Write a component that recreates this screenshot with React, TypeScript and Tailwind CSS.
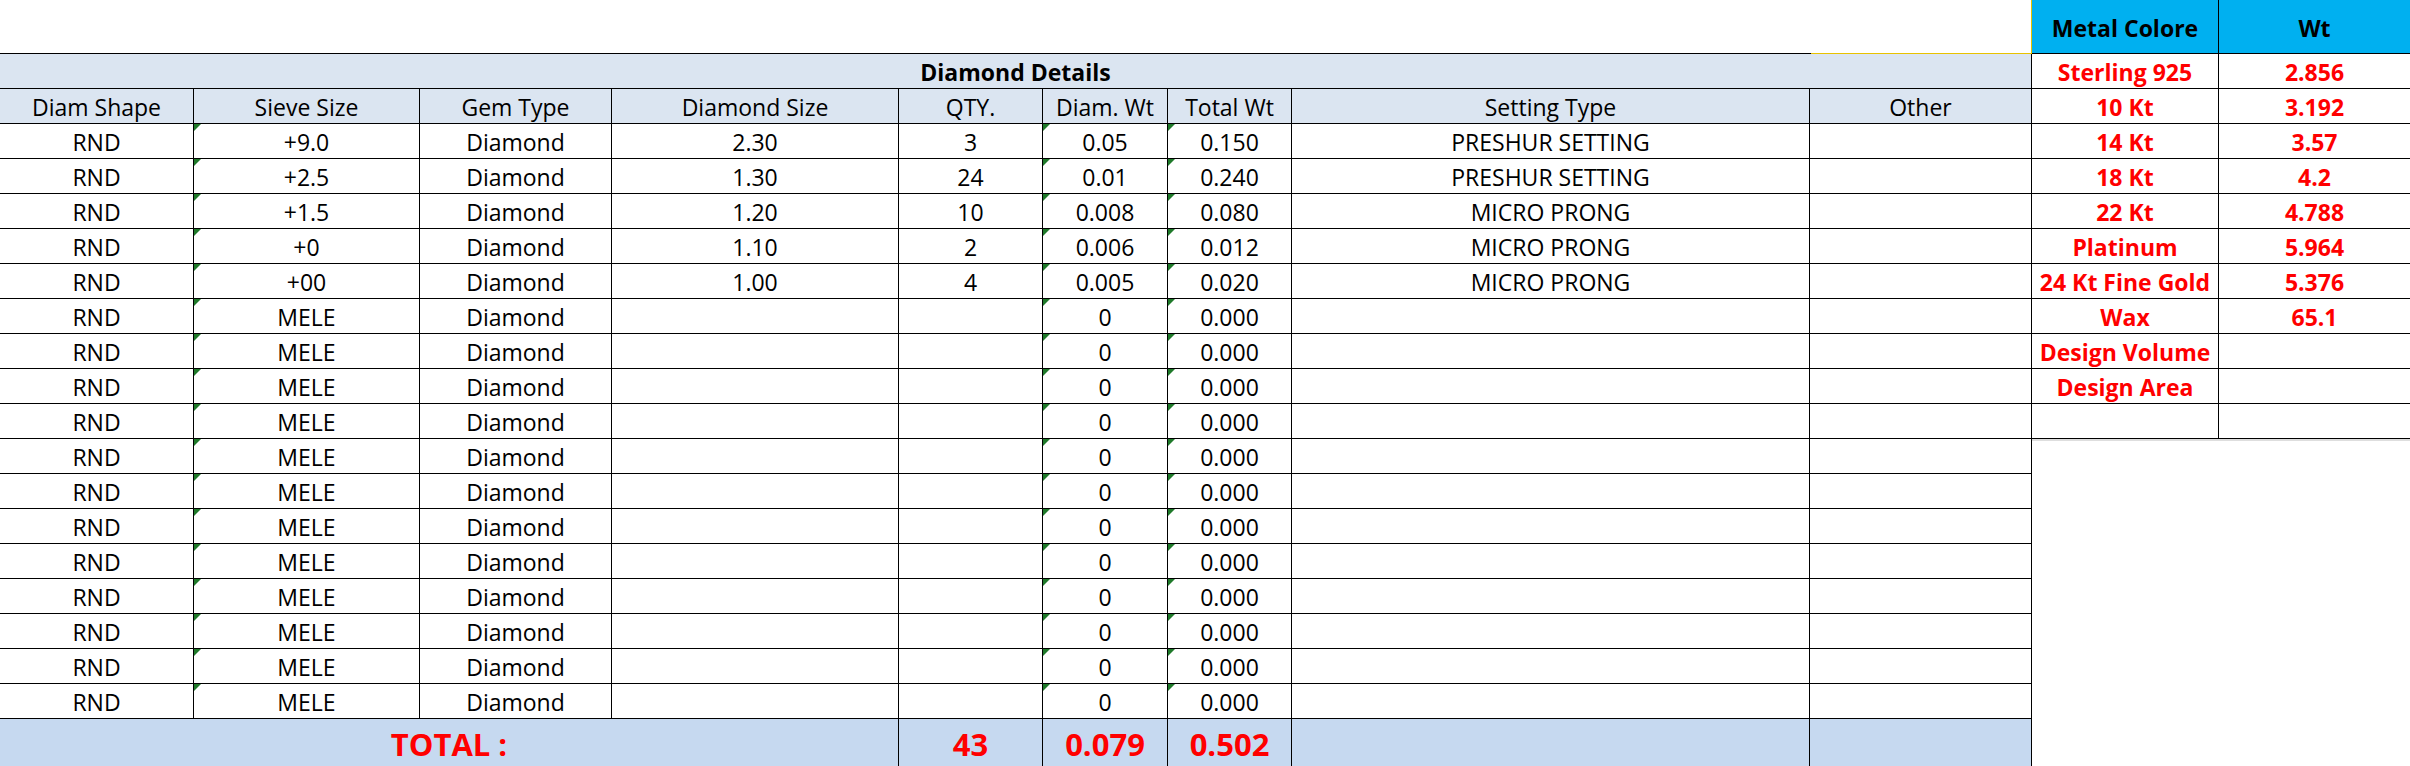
import React from "react";

type Row = {
  shape: string;
  sieve: string;
  gem: string;
  size: string;
  qty: string;
  dwt: string;
  twt: string;
  setting: string;
  other: string;
};

const rows: Row[] = [
  { shape: "RND", sieve: "+9.0", gem: "Diamond", size: "2.30", qty: "3", dwt: "0.05", twt: "0.150", setting: "PRESHUR SETTING", other: "" },
  { shape: "RND", sieve: "+2.5", gem: "Diamond", size: "1.30", qty: "24", dwt: "0.01", twt: "0.240", setting: "PRESHUR SETTING", other: "" },
  { shape: "RND", sieve: "+1.5", gem: "Diamond", size: "1.20", qty: "10", dwt: "0.008", twt: "0.080", setting: "MICRO PRONG", other: "" },
  { shape: "RND", sieve: "+0", gem: "Diamond", size: "1.10", qty: "2", dwt: "0.006", twt: "0.012", setting: "MICRO PRONG", other: "" },
  { shape: "RND", sieve: "+00", gem: "Diamond", size: "1.00", qty: "4", dwt: "0.005", twt: "0.020", setting: "MICRO PRONG", other: "" },
  ...Array.from({ length: 12 }, () => ({
    shape: "RND",
    sieve: "MELE",
    gem: "Diamond",
    size: "",
    qty: "",
    dwt: "0",
    twt: "0.000",
    setting: "",
    other: "",
  })),
];

const metals: [string, string][] = [
  ["Sterling 925", "2.856"],
  ["10 Kt", "3.192"],
  ["14 Kt", "3.57"],
  ["18 Kt", "4.2"],
  ["22 Kt", "4.788"],
  ["Platinum", "5.964"],
  ["24 Kt Fine Gold", "5.376"],
  ["Wax", "65.1"],
  ["Design Volume", ""],
  ["Design Area", ""],
  ["", ""],
];

function Tri() {
  return (
    <svg className="absolute left-0 top-0" width="7" height="7" viewBox="0 0 7 7">
      <polygon points="0,0 7,0 0,7" fill="#1f7a2a" />
    </svg>
  );
}

function Cell({ children, green }: { children?: React.ReactNode; green?: boolean }) {
  return (
    <div className="relative flex items-center justify-center border-r border-black pt-[3px] whitespace-nowrap">
      {green && <Tri />}
      {children}
    </div>
  );
}

export default function App() {
  return (
    <div className="w-[2410px] h-[766px] overflow-hidden bg-white text-black font-['Open_Sans',sans-serif] text-[23px] leading-none flex items-start">
      {/* Left: main table */}
      <div className="w-[2032px] flex flex-col shrink-0">
        <div className="h-[53px] shrink-0 border-r border-[#e8c200]" />
        <div className="flex h-px shrink-0">
          <div className="w-[1811px] bg-black" />
          <div className="flex-1 bg-[#e8c200]" />
        </div>
        <div className="h-[35px] shrink-0 bg-[#dbe5f1] border-b border-r border-black flex items-center justify-center pt-[3px] font-bold">
          Diamond Details
        </div>
        <div className="grid grid-cols-[194px_226px_192px_287px_144px_125px_124px_518px_222px] h-[35px] shrink-0 bg-[#dbe5f1] border-b border-black">
          <Cell>Diam Shape</Cell>
          <Cell>Sieve Size</Cell>
          <Cell>Gem Type</Cell>
          <Cell>Diamond Size</Cell>
          <Cell>QTY.</Cell>
          <Cell>Diam. Wt</Cell>
          <Cell>Total Wt</Cell>
          <Cell>Setting Type</Cell>
          <Cell>Other</Cell>
        </div>
        {rows.map((r, i) => (
          <div
            key={i}
            className="grid grid-cols-[194px_226px_192px_287px_144px_125px_124px_518px_222px] h-[35px] shrink-0 border-b border-black"
          >
            <Cell>{r.shape}</Cell>
            <Cell green>{r.sieve}</Cell>
            <Cell>{r.gem}</Cell>
            <Cell>{r.size}</Cell>
            <Cell>{r.qty}</Cell>
            <Cell green>{r.dwt}</Cell>
            <Cell green>{r.twt}</Cell>
            <Cell>{r.setting}</Cell>
            <Cell>{r.other}</Cell>
          </div>
        ))}
        <div className="grid grid-cols-[899px_144px_125px_124px_518px_222px] h-[47px] shrink-0 bg-[#c6d9f0] text-[#ff0000] font-bold text-[31px]">
          <Cell>TOTAL :</Cell>
          <Cell>43</Cell>
          <Cell>0.079</Cell>
          <Cell>0.502</Cell>
          <Cell></Cell>
          <Cell></Cell>
        </div>
      </div>

      {/* Right: metal table */}
      <div className="w-[378px] flex flex-col shrink-0">
        <div className="grid grid-cols-[187px_191px] h-[54px] shrink-0 bg-[#00b0f0] border-b border-black font-bold">
          <Cell>Metal Colore</Cell>
          <div className="flex items-center justify-center pt-[3px]">Wt</div>
        </div>
        {metals.map(([m, w], i) => (
          <div
            key={i}
            className="grid grid-cols-[187px_191px] h-[35px] shrink-0 border-b border-black font-bold text-[#ff0000]"
          >
            <Cell>{m}</Cell>
            <div className="flex items-center justify-center pt-[3px]">{w}</div>
          </div>
        ))}
        <div className="h-[2px] shrink-0 bg-[#dedede]" />
      </div>
    </div>
  );
}
